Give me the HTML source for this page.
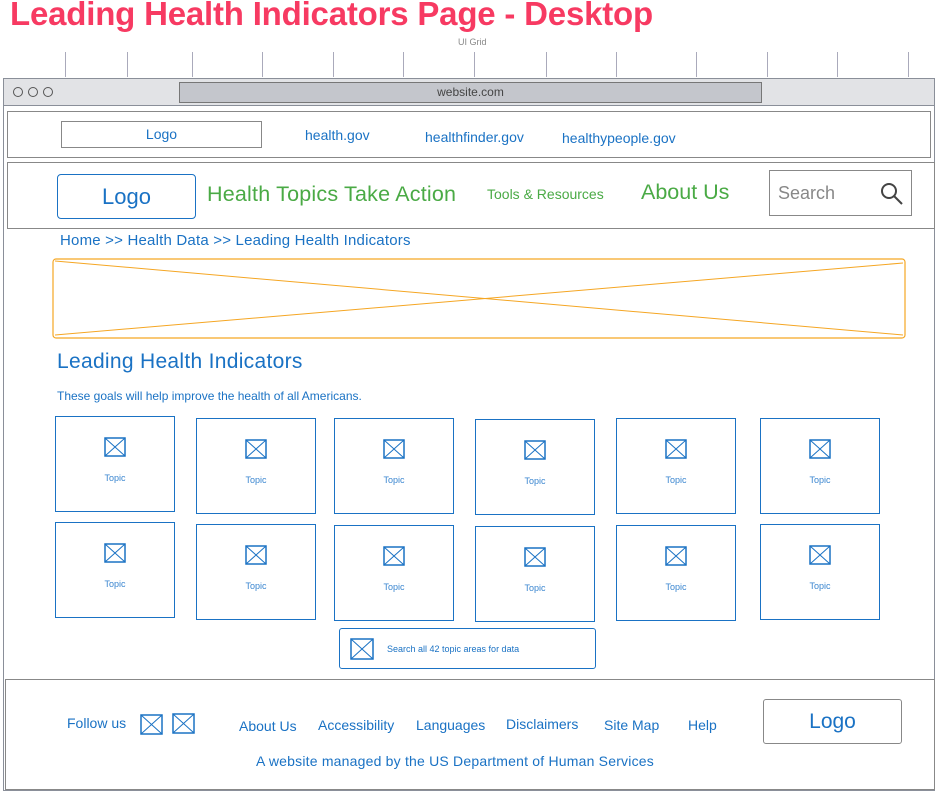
<!DOCTYPE html>
<html><head><meta charset="utf-8"><style>
body{margin:0;width:938px;height:794px;background:#fff;position:relative;overflow:hidden;font-family:"Liberation Sans",sans-serif}
.a{position:absolute}
.b{color:#1a72c4}
.g{color:#4aaa45}
.box{position:absolute;border:1.5px solid #1a72c4;box-sizing:border-box}
.tile{position:absolute;width:120px;height:96px;border:1.5px solid #1a72c4;box-sizing:border-box;text-align:center;font-size:9px;color:#3a86d0}
.tile svg{display:block;margin:20px auto 16px}
.gl{position:absolute;top:52px;height:25px;width:1px;background:#aab}
</style></head><body>
<div class="a" style="left:10px;top:-5px;font-size:33px;font-weight:bold;color:#f73a62;letter-spacing:-0.2px">Leading Health Indicators Page - Desktop</div>
<div class="a" style="left:458px;top:37px;font-size:9px;color:#888">UI Grid</div>
<div class="gl" style="left:65px"></div><div class="gl" style="left:127px"></div><div class="gl" style="left:192px"></div><div class="gl" style="left:262px"></div><div class="gl" style="left:333px"></div><div class="gl" style="left:403px"></div><div class="gl" style="left:474px"></div><div class="gl" style="left:546px"></div><div class="gl" style="left:616px"></div><div class="gl" style="left:696px"></div><div class="gl" style="left:767px"></div><div class="gl" style="left:837px"></div><div class="gl" style="left:908px"></div>
<div class="a" style="left:3px;top:78px;width:932px;height:713px;border:1.5px solid #8a8f99;box-sizing:border-box"></div>
<div class="a" style="left:4px;top:79px;width:930px;height:26px;background:#e2e3e6;border-bottom:1px solid #8a8f99"></div>
<div class="a" style="left:13px;top:87px;width:8px;height:8px;border:1px solid #555;border-radius:50%"></div>
<div class="a" style="left:28px;top:87px;width:8px;height:8px;border:1px solid #555;border-radius:50%"></div>
<div class="a" style="left:43px;top:87px;width:8px;height:8px;border:1px solid #555;border-radius:50%"></div>
<div class="a" style="left:179px;top:82px;width:583px;height:21px;background:#c4c6cc;border:1px solid #777;box-sizing:border-box;text-align:center;font-size:12px;line-height:19px;color:#444">website.com</div>
<div class="a" style="left:7px;top:111px;width:924px;height:47px;border:1px solid #888;box-sizing:border-box"></div>
<div class="a" style="left:61px;top:121px;width:201px;height:27px;border:1px solid #888;box-sizing:border-box;text-align:center;font-size:14px;line-height:25px"><span class="b">Logo</span></div>
<div class="a b" style="left:305px;top:127px;font-size:14px">health.gov</div>
<div class="a b" style="left:425px;top:129px;font-size:14px">healthfinder.gov</div>
<div class="a b" style="left:562px;top:130px;font-size:14px">healthypeople.gov</div>
<div class="a" style="left:7px;top:162px;width:928px;height:67px;border:1px solid #888;box-sizing:border-box"></div>
<div class="box b" style="left:57px;top:174px;width:139px;height:45px;border-radius:4px;text-align:center;font-size:22px;line-height:43px">Logo</div>
<div class="a g" style="left:207px;top:182px;font-size:21.5px;letter-spacing:0.2px">Health Topics Take Action</div>
<div class="a g" style="left:487px;top:186px;font-size:14px">Tools &amp; Resources</div>
<div class="a g" style="left:641px;top:180px;font-size:21.5px">About Us</div>
<div class="a" style="left:769px;top:170px;width:143px;height:46px;border:1px solid #888;box-sizing:border-box"></div>
<div class="a" style="left:778px;top:183px;font-size:18px;color:#888">Search</div>
<svg class="a" style="left:879px;top:181px" width="26" height="26"><circle cx="10" cy="10" r="7" fill="none" stroke="#444" stroke-width="2"/><line x1="15" y1="15" x2="23" y2="23" stroke="#444" stroke-width="2"/></svg>
<div class="a b" style="left:60px;top:232px;font-size:15px;letter-spacing:0.2px">Home &gt;&gt; Health Data &gt;&gt; Leading Health Indicators</div>
<svg class="a" style="left:52px;top:258px" width="854" height="82"><rect x="1" y="1" width="852" height="79" rx="3" fill="none" stroke="#f5a623" stroke-width="1.2"/><line x1="3" y1="3" x2="851" y2="77" stroke="#f5a623"/><line x1="3" y1="77" x2="851" y2="5" stroke="#f5a623"/></svg>
<div class="a b" style="left:57px;top:350px;font-size:21px;letter-spacing:0.3px">Leading Health Indicators</div>
<div class="a b" style="left:57px;top:389px;font-size:12px">These goals will help improve the health of all Americans.</div>
<div class="tile" style="left:55px;top:416px"><svg width="22" height="20"><rect x="1" y="1" width="20" height="18" fill="none" stroke="#1a72c4" stroke-width="1.5"/><path d="M1 1L21 19M21 1L1 19" stroke="#1a72c4"/></svg>Topic</div>
<div class="tile" style="left:196px;top:418px"><svg width="22" height="20"><rect x="1" y="1" width="20" height="18" fill="none" stroke="#1a72c4" stroke-width="1.5"/><path d="M1 1L21 19M21 1L1 19" stroke="#1a72c4"/></svg>Topic</div>
<div class="tile" style="left:334px;top:418px"><svg width="22" height="20"><rect x="1" y="1" width="20" height="18" fill="none" stroke="#1a72c4" stroke-width="1.5"/><path d="M1 1L21 19M21 1L1 19" stroke="#1a72c4"/></svg>Topic</div>
<div class="tile" style="left:475px;top:419px"><svg width="22" height="20"><rect x="1" y="1" width="20" height="18" fill="none" stroke="#1a72c4" stroke-width="1.5"/><path d="M1 1L21 19M21 1L1 19" stroke="#1a72c4"/></svg>Topic</div>
<div class="tile" style="left:616px;top:418px"><svg width="22" height="20"><rect x="1" y="1" width="20" height="18" fill="none" stroke="#1a72c4" stroke-width="1.5"/><path d="M1 1L21 19M21 1L1 19" stroke="#1a72c4"/></svg>Topic</div>
<div class="tile" style="left:760px;top:418px"><svg width="22" height="20"><rect x="1" y="1" width="20" height="18" fill="none" stroke="#1a72c4" stroke-width="1.5"/><path d="M1 1L21 19M21 1L1 19" stroke="#1a72c4"/></svg>Topic</div>
<div class="tile" style="left:55px;top:522px"><svg width="22" height="20"><rect x="1" y="1" width="20" height="18" fill="none" stroke="#1a72c4" stroke-width="1.5"/><path d="M1 1L21 19M21 1L1 19" stroke="#1a72c4"/></svg>Topic</div>
<div class="tile" style="left:196px;top:524px"><svg width="22" height="20"><rect x="1" y="1" width="20" height="18" fill="none" stroke="#1a72c4" stroke-width="1.5"/><path d="M1 1L21 19M21 1L1 19" stroke="#1a72c4"/></svg>Topic</div>
<div class="tile" style="left:334px;top:525px"><svg width="22" height="20"><rect x="1" y="1" width="20" height="18" fill="none" stroke="#1a72c4" stroke-width="1.5"/><path d="M1 1L21 19M21 1L1 19" stroke="#1a72c4"/></svg>Topic</div>
<div class="tile" style="left:475px;top:526px"><svg width="22" height="20"><rect x="1" y="1" width="20" height="18" fill="none" stroke="#1a72c4" stroke-width="1.5"/><path d="M1 1L21 19M21 1L1 19" stroke="#1a72c4"/></svg>Topic</div>
<div class="tile" style="left:616px;top:525px"><svg width="22" height="20"><rect x="1" y="1" width="20" height="18" fill="none" stroke="#1a72c4" stroke-width="1.5"/><path d="M1 1L21 19M21 1L1 19" stroke="#1a72c4"/></svg>Topic</div>
<div class="tile" style="left:760px;top:524px"><svg width="22" height="20"><rect x="1" y="1" width="20" height="18" fill="none" stroke="#1a72c4" stroke-width="1.5"/><path d="M1 1L21 19M21 1L1 19" stroke="#1a72c4"/></svg>Topic</div>
<div class="box" style="left:339px;top:628px;width:257px;height:41px;border-radius:3px"></div>
<svg class="a" style="left:350px;top:638px" width="24" height="22"><rect x="1" y="1" width="22" height="20" fill="none" stroke="#1a72c4" stroke-width="1.5"/><path d="M1 1L23 21M23 1L1 21" stroke="#1a72c4"/></svg>
<div class="a b" style="left:387px;top:644px;font-size:9px">Search all 42 topic areas for data</div>
<div class="a" style="left:5px;top:679px;width:930px;height:111px;border:1px solid #888;box-sizing:border-box"></div>
<div class="a b" style="left:67px;top:715px;font-size:14px">Follow us</div>
<svg class="a" style="left:140px;top:714px" width="24" height="22"><rect x="1" y="1" width="21" height="19" fill="none" stroke="#1a72c4" stroke-width="1.5"/><path d="M1 1L22 20M22 1L1 20" stroke="#1a72c4"/></svg>
<svg class="a" style="left:172px;top:713px" width="24" height="22"><rect x="1" y="1" width="21" height="19" fill="none" stroke="#1a72c4" stroke-width="1.5"/><path d="M1 1L22 20M22 1L1 20" stroke="#1a72c4"/></svg>
<div class="a b" style="left:239px;top:718px;font-size:14px">About Us</div>
<div class="a b" style="left:318px;top:717px;font-size:14px">Accessibility</div>
<div class="a b" style="left:416px;top:717px;font-size:14px">Languages</div>
<div class="a b" style="left:506px;top:716px;font-size:14px">Disclaimers</div>
<div class="a b" style="left:604px;top:717px;font-size:14px">Site Map</div>
<div class="a b" style="left:688px;top:717px;font-size:14px">Help</div>
<div class="a b" style="left:763px;top:699px;width:139px;height:45px;border:1px solid #888;box-sizing:border-box;border-radius:3px;text-align:center;font-size:21px;line-height:43px">Logo</div>
<div class="a b" style="left:256px;top:753px;font-size:14px;letter-spacing:0.2px">A website managed by the US Department of Human Services</div>
</body></html>
